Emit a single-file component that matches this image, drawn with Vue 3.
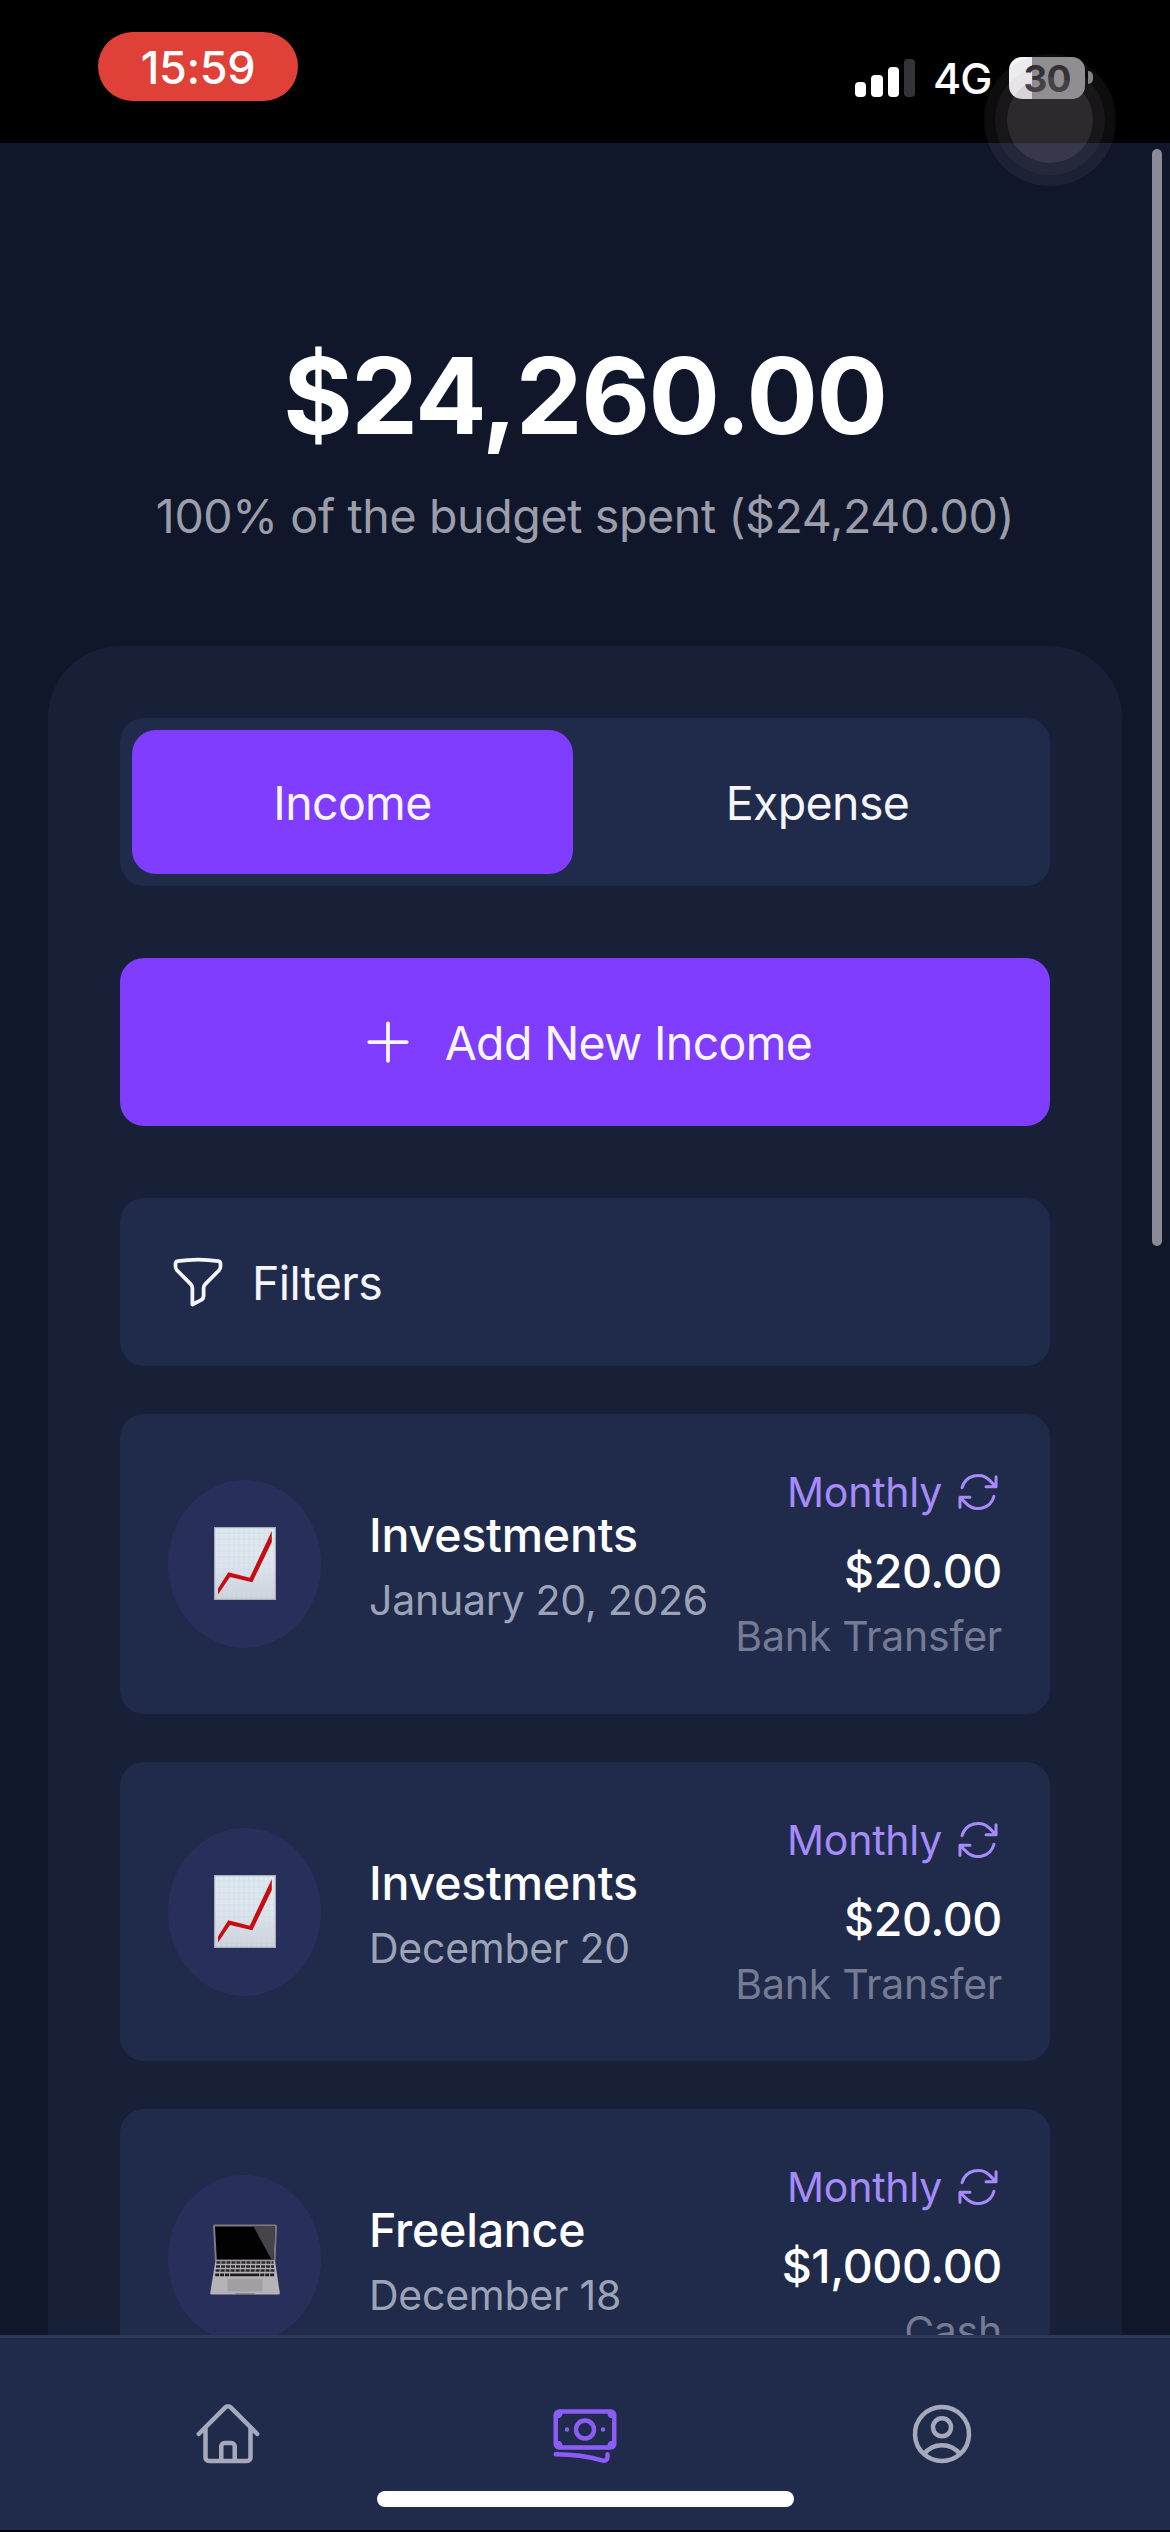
<script setup>
const transactions = [
  { id: 1, icon: 'chart', title: 'Investments', date: 'January 20, 2026', amount: '$20.00', method: 'Bank Transfer' },
  { id: 2, icon: 'chart', title: 'Investments', date: 'December 20', amount: '$20.00', method: 'Bank Transfer' },
  { id: 3, icon: 'laptop', title: 'Freelance', date: 'December 18', amount: '$1,000.00', method: 'Cash' },
]
const gridX = [5, 10, 15, 20, 25, 30, 35, 40, 45, 50, 55]
const gridY = [6, 12, 18, 24, 30, 36, 42, 48, 54, 60, 66]
const keyRows = [
  { y: 38.6, x: 6.4 },
  { y: 42.6, x: 6 },
  { y: 46.6, x: 5.6 },
]
</script>

<template>
  <div class="screen">
    <header class="status">
      <div class="clock">15:59</div>
      <div class="indicators">
        <div class="signal"><i class="b1"></i><i class="b2"></i><i class="b3"></i><i class="b4"></i></div>
        <span class="network">4G</span>
        <div class="battery"><span>30</span></div>
        <i class="nub"></i>
      </div>
    </header>

    <main class="content">
      <h1 class="total">$24,260.00</h1>
      <p class="budget">100% of the budget spent ($24,240.00)</p>

      <section class="panel">
        <div class="tabs">
          <button class="tab active">Income</button>
          <button class="tab">Expense</button>
        </div>

        <button class="add">
          <svg class="icon60" viewBox="0 0 24 24"><path d="M12 4.5v15m7.5-7.5h-15" /></svg>
          <span>Add New Income</span>
        </button>

        <div class="filters">
          <svg class="icon60" viewBox="0 0 24 24"><path d="M12 3c2.755 0 5.455.232 8.083.678.533.09.917.556.917 1.096v1.044a2.25 2.25 0 0 1-.659 1.591l-5.432 5.432a2.25 2.25 0 0 0-.659 1.591v2.927a2.25 2.25 0 0 1-1.244 2.013L9.75 21v-6.568a2.25 2.25 0 0 0-.659-1.591L3.659 7.409A2.25 2.25 0 0 1 3 5.818V4.774c0-.54.384-1.006.917-1.096A48.32 48.32 0 0 1 12 3Z" /></svg>
          <span>Filters</span>
        </div>

        <div class="list">
          <article v-for="t in transactions" :key="t.id" class="card">
            <div class="avatar">
              <svg v-if="t.icon === 'chart'" class="chart" viewBox="0 0 62 73">
                <defs>
                  <linearGradient id="paper" x1="0" y1="0" x2="0" y2="1">
                    <stop offset="0" stop-color="#dfe9ef" />
                    <stop offset="0.5" stop-color="#dfe5ee" />
                    <stop offset="1" stop-color="#cdd0d8" />
                  </linearGradient>
                </defs>
                <rect x="0.5" y="0.5" width="61" height="72" fill="url(#paper)" stroke="#a8b0bc" />
                <path v-for="x in gridX" :key="'x' + x" :d="`M${x} 1V72`" stroke="#cbdce9" stroke-width="0.7" />
                <path v-for="y in gridY" :key="'y' + y" :d="`M1 ${y}H61`" stroke="#cbdce9" stroke-width="0.7" />
                <path d="M4 61.5 14.3 45.3 35.8 50.8 57.8 4 57.8 15 38.3 55.3 16 50 4 67.5Z" fill="#c50d12" />
              </svg>
              <svg v-else class="laptop" viewBox="0 0 70 71">
                <path d="M4.5 0.5H65Q67 .5 67 2.5L65.5 37H5L3 2.5Q3 .5 4.5 .5Z" fill="#7d7b80" />
                <path d="M5 2.5H65L63.5 35.5H6.8Z" fill="#020203" />
                <path d="M43.5 2.5H65L63.5 35.5H61.5Z" fill="#464349" />
                <path d="M5.5 36.5H65L69.8 69Q70 70.5 68.5 70.5H1.3Q0 70.5.2 69Z" fill="#b5b3b8" />
                <path v-for="r in keyRows" :key="r.y" :d="`M${r.x} ${r.y}H${70 - r.x}`" stroke="#29272b" stroke-width="2.5" stroke-dasharray="4.1 0.9" />
                <path d="M5.2 50.8H64.8" stroke="#1d1b1f" stroke-width="2.8" stroke-dasharray="4 .9 4 .9 4 .9 29.5 .9 4 .9 4 .9 4 .9" />
                <path d="M17.5 54.5H52.5V67.5H17.5Z" fill="#a19fa3" />
                <path d="M25 69.5H45L44 70.7H26Z" fill="#69676d" />
              </svg>
            </div>
            <div class="info">
              <div class="title">{{ t.title }}</div>
              <div class="date">{{ t.date }}</div>
            </div>
            <div class="values">
              <div class="repeat">
                <span>Monthly</span>
                <svg viewBox="0 0 24 24"><path d="M16.023 9.348h4.992v-.001M2.985 19.644v-4.992m0 0h4.992m-4.993 0 3.181 3.183a8.25 8.25 0 0 0 13.803-3.7M4.031 9.865a8.25 8.25 0 0 1 13.803-3.7l3.181 3.182m0-4.991v4.99" /></svg>
              </div>
              <div class="amount">{{ t.amount }}</div>
              <div class="method">{{ t.method }}</div>
            </div>
          </article>
        </div>
      </section>
    </main>

    <nav class="nav">
      <div class="links">
        <svg viewBox="0 0 24 24"><path d="m2.25 12 8.954-8.955c.44-.439 1.152-.439 1.591 0L21.75 12M4.5 9.75v10.125c0 .621.504 1.125 1.125 1.125H9.75v-4.875c0-.621.504-1.125 1.125-1.125h2.25c.621 0 1.125.504 1.125 1.125V21h4.125c.621 0 1.125-.504 1.125-1.125V9.75M8.25 21h8.25" /></svg>
        <svg class="current" viewBox="0 0 24 24"><path d="M2.25 18.75a60.07 60.07 0 0 1 15.797 2.101c.727.198 1.453-.342 1.453-1.096V18.75M3.75 4.5v.75A.75.75 0 0 1 3 6h-.75m0 0v-.375c0-.621.504-1.125 1.125-1.125H20.25M2.25 6v9m18-10.5v.75c0 .414.336.75.75.75h.75m-1.5-1.5h.375c.621 0 1.125.504 1.125 1.125v9.75c0 .621-.504 1.125-1.125 1.125h-.375m1.5-1.5H21a.75.75 0 0 0-.75.75v.75m0 0H3.75m0 0h-.375a1.125 1.125 0 0 1-1.125-1.125V15m1.5 1.5v-.75A.75.75 0 0 0 3 15h-.75M15 10.5a3 3 0 1 1-6 0 3 3 0 0 1 6 0Zm3 0h.008v.008H18V10.5Zm-12 0h.008v.008H6V10.5Z" /></svg>
        <svg viewBox="0 0 24 24"><path d="M17.982 18.725A7.488 7.488 0 0 0 12 15.75a7.488 7.488 0 0 0-5.982 2.975m11.963 0a9 9 0 1 0-11.963 0m11.963 0A8.966 8.966 0 0 1 12 21a8.966 8.966 0 0 1-5.982-2.275M15 9.75a3 3 0 1 1-6 0 3 3 0 0 1 6 0Z" /></svg>
      </div>
      <div class="home-bar"></div>
    </nav>

    <div class="scrollbar"></div>
    <div class="touch"><div class="mid"><div class="core"></div></div></div>
  </div>
</template>

<style>
body {
  margin: 0;
  background: #000;
}
</style>

<style scoped>
.screen {
  position: relative;
  display: flex;
  flex-direction: column;
  width: 1170px;
  height: 2532px;
  overflow: hidden;
  background: #000;
  color: #f5f5fb;
  font-family: Inter, "Liberation Sans", sans-serif;
  font-size: 46.5px;
  line-height: 72px;
  letter-spacing: -0.65px;
}
button {
  border: 0;
  padding: 0;
  color: inherit;
  font: inherit;
  letter-spacing: inherit;
  background: none;
}
svg {
  display: block;
  flex: none;
  fill: none;
  stroke: currentColor;
  stroke-width: 1.5;
  stroke-linecap: round;
  stroke-linejoin: round;
}
.status {
  display: flex;
  justify-content: space-between;
  flex: none;
  box-sizing: border-box;
  height: 143px;
  padding: 32px 77px 0 98px;
}
.clock {
  width: 200px;
  height: 69px;
  border-radius: 35px;
  background: #df4038;
  color: #fff;
  font-size: 45px;
  font-weight: 500;
  line-height: 71px;
  text-align: center;
  letter-spacing: -0.4px;
}
.indicators {
  display: flex;
  align-items: center;
  height: 41px;
  margin-top: 25px;
}
.signal {
  display: flex;
  align-items: flex-end;
  gap: 5px;
  height: 38px;
}
.signal i {
  width: 11.2px;
  border-radius: 4px;
  background: #fff;
}
.signal .b1 { height: 15px; }
.signal .b2 { height: 22px; }
.signal .b3 { height: 30px; }
.signal .b4 { height: 38px; background: #343336; }
.network {
  margin-left: 18px;
  width: 76px;
  color: #fff;
  font-size: 43px;
  font-weight: 500;
  line-height: 46px;
  letter-spacing: -1px;
}
.battery {
  width: 76px;
  height: 42px;
  border-radius: 13px;
  background: linear-gradient(90deg, #f5f4f8 23px, #908e92 23px);
  color: #242326;
  font-size: 37px;
  font-weight: 700;
  line-height: 43px;
  text-align: center;
  letter-spacing: -1px;
}
.nub {
  width: 5px;
  height: 13px;
  margin-left: 3px;
  border-radius: 0 6px 6px 0;
  background: #858387;
}
.content {
  flex: 1;
  min-height: 0;
  overflow: hidden;
  box-sizing: border-box;
  padding: 193px 48px 0;
  background: #11172a;
}
.total {
  margin: 0;
  color: #fff;
  font-size: 106px;
  font-weight: 700;
  line-height: 120px;
  text-align: center;
  letter-spacing: -1.4px;
}
.budget {
  margin: 24px 0 94px;
  color: #9c9dab;
  text-align: center;
  letter-spacing: -0.36px;
}
.panel {
  padding: 72px 72px 0;
  border-radius: 72px 72px 0 0;
  background: #182038;
}
.tabs {
  display: flex;
  gap: 24px;
  box-sizing: border-box;
  height: 168px;
  padding: 12px;
  border-radius: 24px;
  background: #202b4b;
}
.tab {
  flex: 1;
  padding-top: 2px;
  border-radius: 24px;
}
.tab.active {
  background: #803cff;
}
.add {
  display: flex;
  align-items: center;
  justify-content: center;
  gap: 27px;
  width: 930px;
  height: 168px;
  margin: 72px 0;
  border-radius: 24px;
  background: #803cff;
}
.add span,
.filters span {
  padding-top: 2px;
}
.icon60 {
  width: 60px;
  height: 60px;
}
.filters {
  display: flex;
  align-items: center;
  gap: 24px;
  height: 168px;
  box-sizing: border-box;
  padding: 0 48px;
  border-radius: 24px;
  background: #202b4b;
}
.list {
  display: flex;
  flex-direction: column;
  gap: 48px;
  margin-top: 48px;
}
.card {
  display: flex;
  align-items: center;
  height: 299.7px;
  box-sizing: border-box;
  padding: 0 48px;
  border-radius: 24px;
  background: #202b4b;
}
.avatar {
  display: flex;
  align-items: center;
  justify-content: center;
  flex: none;
  width: 153px;
  height: 168px;
  border-radius: 50%;
  background: #292f5b;
}
.chart {
  width: 62px;
  height: 73px;
}
.laptop {
  width: 70px;
  height: 71px;
}
.chart,
.laptop {
  stroke: none;
  stroke-linecap: butt;
}
.info {
  flex: 1;
  margin-left: 48px;
  white-space: nowrap;
}
.title,
.amount {
  color: #fff;
  font-weight: 500;
  line-height: 74px;
  margin-bottom: -2px;
}
.title {
  letter-spacing: -0.2px;
}
.amount {
  letter-spacing: -0.4px;
}
.date,
.repeat,
.method {
  font-size: 41px;
  line-height: 60px;
  letter-spacing: -0.25px;
}
.date {
  color: #9da3b7;
}
.values {
  text-align: right;
  white-space: nowrap;
}
.repeat {
  display: flex;
  justify-content: flex-end;
  align-items: center;
  gap: 12px;
  margin-bottom: 12px;
  color: #a78bfa;
}
.repeat svg {
  width: 48px;
  height: 48px;
}
.method {
  color: #757b93;
}
.nav {
  flex: none;
  height: 192px;
  margin-bottom: 2px;
  border-top: 3px solid #2b395d;
  background: #202b4b;
}
.links {
  display: flex;
  justify-content: space-between;
  padding: 60px 192px 0;
  color: #a5a9ba;
}
.links svg {
  width: 72px;
  height: 72px;
}
.links .current {
  color: #8b5cf6;
}
.home-bar {
  width: 417px;
  height: 16px;
  margin: 21px auto 0;
  border-radius: 8px;
  background: #fff;
}
.scrollbar {
  position: absolute;
  top: 149px;
  left: 1152px;
  width: 10px;
  height: 1097px;
  border-radius: 5px;
  background: #8a8b97;
}
.touch {
  position: absolute;
  top: 54px;
  left: 984px;
  width: 132px;
  height: 132px;
}
.touch,
.mid,
.core {
  display: flex;
  align-items: center;
  justify-content: center;
  border-radius: 50%;
}
.touch {
  background: rgba(150, 145, 150, 0.09);
}
.mid {
  width: 110px;
  height: 110px;
  background: rgba(150, 145, 150, 0.07);
}
.core {
  width: 86px;
  height: 86px;
  background: rgba(150, 145, 150, 0.17);
}
</style>
